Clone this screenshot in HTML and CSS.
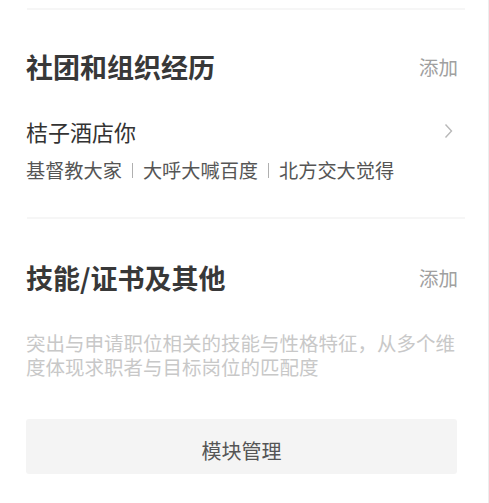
FILE: index.html
```html
<!DOCTYPE html>
<html lang="zh">
<head>
<meta charset="utf-8">
<link rel="stylesheet" href="styles.css">
</head>
<body>
<div class="page">
  <div class="divider divider-top"></div>
  <section class="section">
    <div class="section-head">
      <h2 class="section-title">社团和组织经历</h2>
      <span class="add">添加</span>
    </div>
    <div class="item">
      <div class="item-row">
        <span class="item-title">桔子酒店你</span>
        <svg class="chevron" width="9" height="16" viewBox="0 0 9 16"><polyline points="1.5,1.5 7.5,8 1.5,14.5" fill="none" stroke="#b8b8b8" stroke-width="1.4"/></svg>
      </div>
      <div class="item-sub">基督教大家<span class="sep"></span>大呼大喊百度<span class="sep"></span>北方交大觉得</div>
    </div>
  </section>
  <div class="divider divider-mid"></div>
  <section class="section">
    <div class="section-head head-2">
      <h2 class="section-title">技能/证书及其他</h2>
      <span class="add">添加</span>
    </div>
    <p class="desc">突出与申请职位相关的技能与性格特征，从多个维度体现求职者与目标岗位的匹配度</p>
  </section>
  <button class="manage">模块管理</button>
</div>
</body>
</html>
```
FILE: styles.css
```css
html, body {
  margin: 0;
  padding: 0;
  background: #fff;
}
body {
  font-family: "Noto Sans CJK SC", "Noto Sans", sans-serif;
}
.page {
  width: 432px;
  height: 503px;
  padding: 0 30px 0 26px;
  border-right: 1px solid #ededed;
  box-sizing: content-box;
}
.divider {
  height: 2px;
  background: #f6f6f6;
  margin-left: 1px;
  margin-right: -7px;
}
.divider-top {
  margin-top: 0;
  position: relative;
  top: 8px;
}
.section-head {
  display: flex;
  justify-content: space-between;
  align-items: center;
  height: 40px;
  margin-top: 45px;
}
.section-title {
  margin: 0;
  font-size: 27px;
  font-weight: 700;
  color: #383838;
  line-height: 40px;
}
.add {
  font-size: 19.5px;
  color: #a0a0a0;
  line-height: 40px;
}
.item {
  margin-top: 29px;
}
.item-row {
  display: flex;
  justify-content: space-between;
  align-items: center;
  height: 30px;
}
.item-title {
  font-size: 22px;
  color: #333;
  line-height: 30px;
}
.chevron {
  margin-right: 5px;
}
.item-sub {
  margin-top: 10px;
  font-size: 19.2px;
  line-height: 28px;
  color: #555;
  display: flex;
  align-items: center;
}
.sep {
  display: inline-block;
  width: 1px;
  height: 15px;
  background: #b0b0b0;
  margin: 0 10px;
}
.divider-mid {
  margin-top: 33px;
}
.head-2 {
  margin-top: 39px;
}
.desc {
  margin: 33px 0 0;
  font-size: 19.5px;
  line-height: 24px;
  color: #c8c8c8;
}
.manage {
  display: block;
  width: 431px;
  height: 55px;
  margin-top: 40px;
  border: none;
  border-radius: 3px;
  background: #f4f4f4;
  font-family: "Noto Sans CJK SC", sans-serif;
  font-size: 20px;
  color: #555;
  padding: 8px 0 0;
}
```
